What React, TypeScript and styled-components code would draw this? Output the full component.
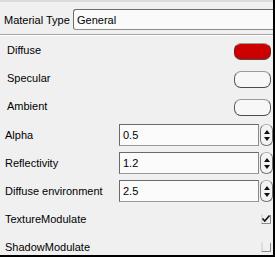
import styled, { createGlobalStyle } from 'styled-components';

const GlobalStyle = createGlobalStyle`
    html, body {
        margin: 0;
        padding: 0;
        background: #000;
    }
    body {
        width: 275px;
        height: 257px;
        overflow: hidden;
    }
`;

type ColorRowData = { label: string; color: string; border: string };
type NumberRowData = { label: string; value: string };
type CheckRowData = { label: string; checked: boolean };

const colorRows: ColorRowData[] = [
    { label: 'Diffuse', color: '#cc0000', border: '#7a1a1a' },
    { label: 'Specular', color: '#f7f7f7', border: '#5a5a5a' },
    { label: 'Ambient', color: '#f7f7f7', border: '#5a5a5a' },
];

const numberRows: NumberRowData[] = [
    { label: 'Alpha', value: '0.5' },
    { label: 'Reflectivity', value: '1.2' },
    { label: 'Diffuse environment', value: '2.5' },
];

const checkRows: CheckRowData[] = [
    { label: 'TextureModulate', checked: true },
    { label: 'ShadowModulate', checked: false },
];

const Spinner = () => (
    <SpinButton>
        <svg width='6' height='4' viewBox='0 0 6 4'>
            <path d='M3 0 L6 4 L0 4 Z' fill='#111' />
        </svg>
        <svg width='6' height='4' viewBox='0 0 6 4'>
            <path d='M0 0 L6 0 L3 4 Z' fill='#111' />
        </svg>
    </SpinButton>
);

const CheckBox = ({ checked }: { checked: boolean }) => (
    <svg width='10' height='10' viewBox='0 0 10 10'>
        <path d='M1 0.5 V9.5 H9.5' stroke='#c8c8c8' strokeWidth='1' fill='none' />
        <path d='M0.5 9.5 H9.5 V1' stroke='#8a8a8a' strokeWidth='1' fill='none' />
        {checked && (
            <path
                d='M1.5 4.5 L3.8 7 L8.5 1.5'
                stroke='#1a1a2a'
                strokeWidth='1.8'
                fill='none'
            />
        )}
    </svg>
);

export default function App() {
    return (
        <>
            <GlobalStyle />
            <Panel>
                <HeaderRow>
                    <HeaderLabel>Material Type</HeaderLabel>
                    <Combo>General</Combo>
                </HeaderRow>
                <Separator />
                {colorRows.map((row) => (
                    <ColorRow key={row.label}>
                        <Label>{row.label}</Label>
                        <Swatch color={row.color} border={row.border} />
                    </ColorRow>
                ))}
                <NumberList>
                    {numberRows.map((row) => (
                        <NumberRow key={row.label}>
                            <NumberLabel>{row.label}</NumberLabel>
                            <NumberInput>{row.value}</NumberInput>
                            <Spinner />
                        </NumberRow>
                    ))}
                </NumberList>
                {checkRows.map((row) => (
                    <CheckRow key={row.label}>
                        <Label>{row.label}</Label>
                        <CheckBox checked={row.checked} />
                    </CheckRow>
                ))}
            </Panel>
        </>
    );
}

const Panel = styled.div`
    width: 273px;
    height: 255px;
    background: #f0f0f0;
    border-top: 2px solid #dadada;
    box-sizing: border-box;
    display: flex;
    flex-direction: column;
    overflow: hidden;
    font-family: 'Liberation Sans', Arial, sans-serif;
    font-size: 11px;
    color: #000;

    & > * {
        flex-shrink: 0;
    }
`;

const HeaderRow = styled.div`
    display: flex;
    align-items: center;
    margin-top: 7px;
    height: 21px;
`;

const HeaderLabel = styled.span`
    width: 69px;
    padding-left: 4px;
    flex-shrink: 0;
`;

const Combo = styled.div`
    flex: 1;
    height: 21px;
    box-sizing: border-box;
    display: flex;
    align-items: center;
    padding-left: 3px;
    background: #fafafa;
    border: 1px solid #6e6e6e;
    border-right: none;
    border-bottom-color: #8c8c8c;
    border-radius: 3px 0 0 3px;
`;

const Separator = styled.div`
    margin-top: 4px;
    height: 1px;
    background: #a4a4a4;
    border-bottom: 1px solid #ffffff;
`;

const Label = styled.span`
    padding-left: 7px;
`;

const ColorRow = styled.div`
    display: flex;
    align-items: center;
    justify-content: space-between;
    height: 28px;
    padding-right: 2px;
`;

const Swatch = styled.div<{ color: string; border: string }>`
    width: 37px;
    height: 17px;
    box-sizing: border-box;
    margin-top: 3px;
    border-radius: 7px;
    background: ${({ color }) => color};
    border: 1px solid ${({ border }) => border};
    border-top-color: #9a9a9a;
    border-bottom-color: #4a4a4a;
`;

const NumberList = styled.div`
    display: flex;
    flex-direction: column;
    margin-top: 1px;
`;

const NumberRow = styled.div`
    display: flex;
    align-items: center;
    height: 28px;
`;

const NumberLabel = styled.span`
    width: 119px;
    padding-left: 5px;
    flex-shrink: 0;
    box-sizing: border-box;
`;

const NumberInput = styled.div`
    width: 140px;
    height: 22px;
    box-sizing: border-box;
    padding-left: 3px;
    display: flex;
    align-items: center;
    background: #fbfbfb;
    border: 1px solid #6a6a6a;
    border-right-color: #8a8a8a;
    border-bottom-color: #9a9a9a;
`;

const SpinButton = styled.div`
    margin-left: 1px;
    width: 13px;
    height: 22px;
    box-sizing: border-box;
    display: flex;
    flex-direction: column;
    align-items: center;
    justify-content: space-around;
    padding: 3px 0;
    background: #f4f4f4;
    border: 1px solid #777;
    border-top-color: #b0b0b0;
    border-radius: 6px;
`;

const CheckRow = styled.div`
    display: flex;
    align-items: center;
    justify-content: space-between;
    height: 28px;
    padding-right: 2px;

    ${Label} {
        padding-left: 5px;
    }
`;
